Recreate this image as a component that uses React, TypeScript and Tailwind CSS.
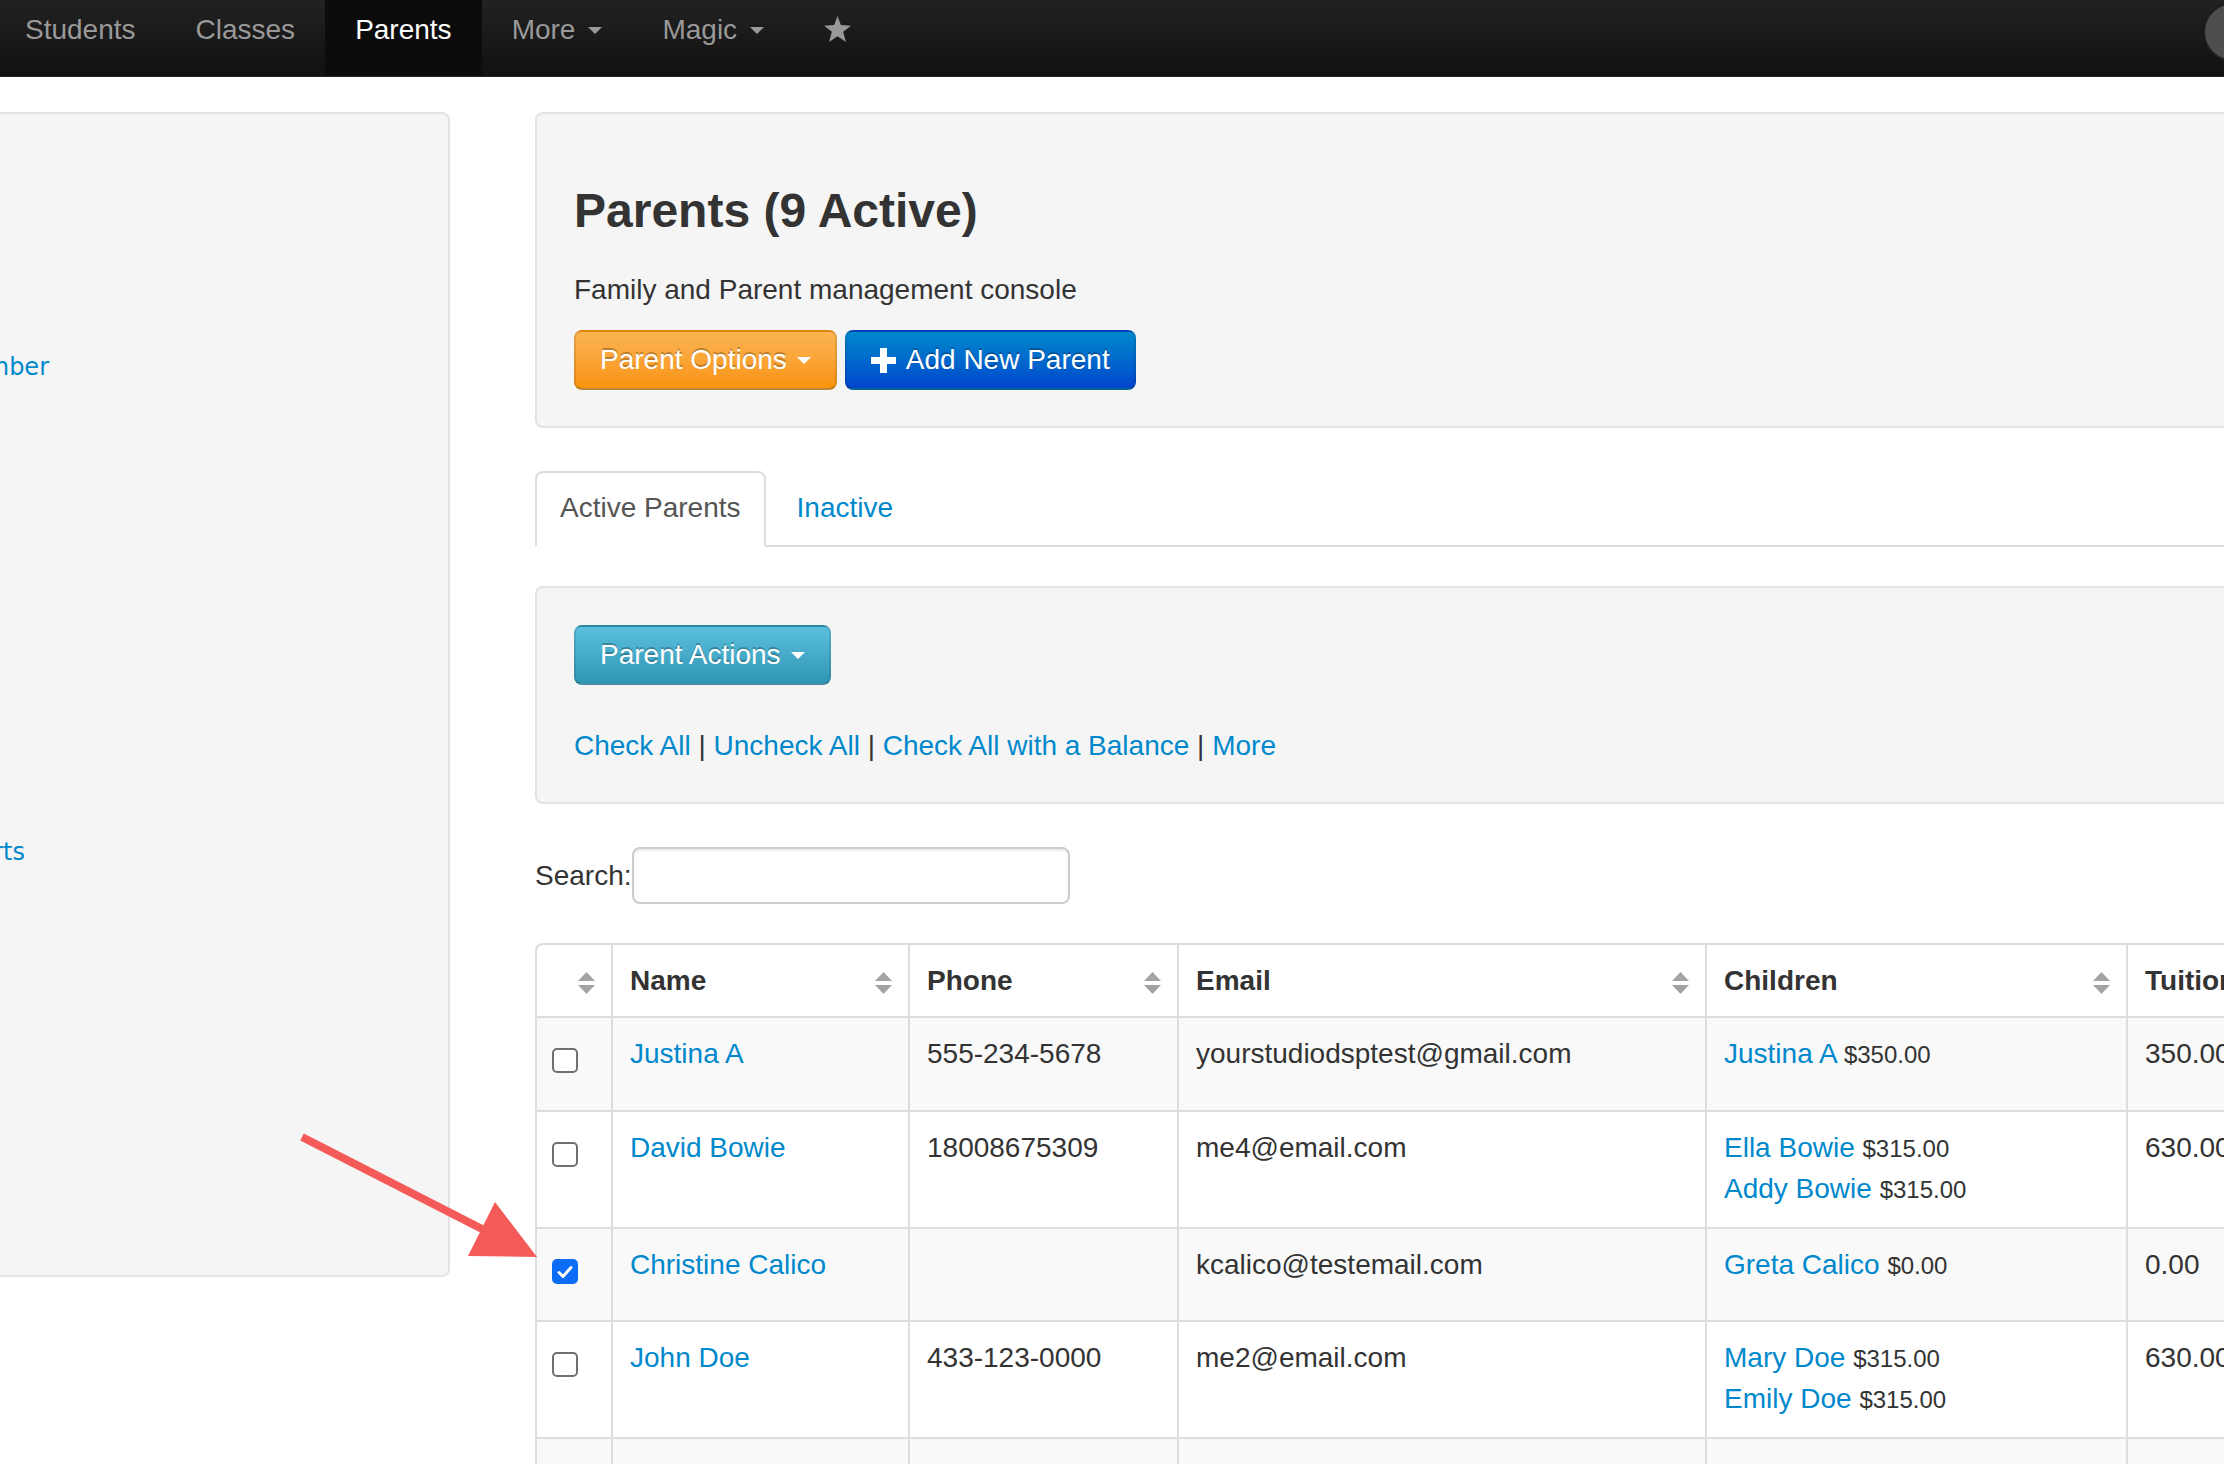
import React from 'react';

type Child = [string, string];

interface ParentRow {
  name: string;
  phone: string;
  email: string;
  children: Child[];
  tuition: string;
  checked?: boolean;
  rowClass: string;
}

const rows: ParentRow[] = [
  { name: 'Justina A', phone: '555-234-5678', email: 'yourstudiodsptest@gmail.com', children: [['Justina A', '$350.00']], tuition: '350.00', rowClass: 'h-[94px] bg-[#f9f9f9]' },
  { name: 'David Bowie', phone: '18008675309', email: 'me4@email.com', children: [['Ella Bowie', '$315.00'], ['Addy Bowie', '$315.00']], tuition: '630.00', rowClass: 'h-[117px] bg-white' },
  { name: 'Christine Calico', phone: '', email: 'kcalico@testemail.com', children: [['Greta Calico', '$0.00']], tuition: '0.00', checked: true, rowClass: 'h-[93px] bg-[#f9f9f9]' },
  { name: 'John Doe', phone: '433-123-0000', email: 'me2@email.com', children: [['Mary Doe', '$315.00'], ['Emily Doe', '$315.00']], tuition: '630.00', rowClass: 'h-[117px] bg-white' },
  { name: 'M Smith', phone: '555-555-0100', email: 'family@email.com', children: [['Rosie Smith', '$315.00']], tuition: '315.00', rowClass: 'h-[100px] bg-[#f9f9f9]' },
];

const Caret = ({ color = 'border-t-white' }: { color?: string }) => (
  <span className={`inline-block ml-[10px] w-0 h-0 border-l-[7px] border-r-[7px] border-t-[7px] border-l-transparent border-r-transparent align-middle ${color}`} />
);

const SortIcon = () => (
  <svg className="absolute right-[16px] top-[27px]" width="17" height="22" viewBox="0 0 17 22">
    <polygon points="8.5,0 17,9 0,9" fill="#a3a3a3" />
    <polygon points="0,13 17,13 8.5,22" fill="#a3a3a3" />
  </svg>
);

const CheckBox = ({ checked }: { checked?: boolean }) =>
  checked ? (
    <span className="mt-[14px] flex w-[26px] h-[25px] rounded-[5px] bg-[#0b6cf5] items-center justify-center">
      <svg width="16" height="14" viewBox="0 0 16 14">
        <path d="M2 7.5 L6 11.5 L14 2.5" stroke="white" strokeWidth="3" fill="none" strokeLinecap="round" strokeLinejoin="round" />
      </svg>
    </span>
  ) : (
    <span className="mt-[14px] block w-[26px] h-[25px] rounded-[5px] border-2 border-[#707070] bg-white" />
  );

const btn = 'inline-flex items-center h-[60px] px-[24px] rounded-[8px] border-2 border-black/10 border-b-black/25 text-white text-[28px] leading-[40px] [text-shadow:0_-2px_0_rgba(0,0,0,0.25)]';

export default function App() {
  const cell = 'border-l-2 border-t-2 border-[#dddddd] align-top pt-[16px] px-[17px] leading-[40px]';

  return (
    <div className="relative w-[2224px] h-[1464px] overflow-hidden bg-white text-[#333] font-['Liberation_Sans',Arial,sans-serif] text-[28px] leading-[40px]">
      {/* Navbar */}
      <div className="relative h-[77px] bg-gradient-to-b from-[#222222] to-[#111111] border-b border-[#252525] flex">
        <ul className="flex -ml-[5px] h-full">
          {['Students', 'Classes'].map(n => (
            <li key={n} className="px-[30px] pt-[10px] text-[#999]">{n}</li>
          ))}
          <li className="px-[30px] pt-[10px] text-white bg-[#0c0c0c]">Parents</li>
          <li className="px-[30px] pt-[10px] text-[#999] flex items-start">
            <span>More</span>
            <span className="h-[40px] flex items-center ml-[3px]"><Caret color="border-t-[#999]" /></span>
          </li>
          <li className="px-[30px] pt-[10px] text-[#999] flex items-start">
            <span>Magic</span>
            <span className="h-[40px] flex items-center ml-[3px]"><Caret color="border-t-[#999]" /></span>
          </li>
          <li className="px-[30px] pt-[16px]">
            <svg width="27" height="26" viewBox="0 0 24 23">
              <polygon points="12,0 15,8 24,8.5 17,14 19.5,23 12,18 4.5,23 7,14 0,8.5 9,8" fill="#999" />
            </svg>
          </li>
        </ul>
        <div className="absolute left-[2203px] top-[2px] w-[60px] h-[60px] rounded-full bg-[#4e4e4e] border-2 border-[#1e1e1e]" />
      </div>

      {/* Body */}
      <div className="flex pt-[35px]">
        {/* Sidebar */}
        <div className="shrink-0 w-[500px] -ml-[50px] h-[1165px] bg-[#f5f5f5] border-2 border-[#e3e3e3] rounded-[8px] font-['DejaVu_Sans',sans-serif] text-[24px] text-[#0088cc]">
          <div className="w-[200px] -ml-[103px] text-right leading-[40px] mt-[233px]">Member</div>
          <div className="w-[200px] -ml-[127px] text-right leading-[40px] mt-[445px]">Reports</div>
        </div>

        {/* Main */}
        <div className="shrink-0 w-[1800px] ml-[85px]">
          {/* Hero */}
          <div className="h-[316px] bg-[#f5f5f5] border-2 border-r-0 border-[#e3e3e3] rounded-l-[8px] pl-[37px] pt-[69px]">
            <h1 className="text-[48px] leading-[56px] font-bold">Parents (9 Active)</h1>
            <p className="mt-[31px]">Family and Parent management console</p>
            <div className="mt-[20px] flex gap-[8px]">
              <button className={`${btn} bg-gradient-to-b from-[#fbb450] to-[#f89406]`}>
                Parent Options <Caret />
              </button>
              <button className={`${btn} bg-gradient-to-b from-[#0088cc] to-[#0044cc]`}>
                <svg className="mr-[10px]" width="25" height="25" viewBox="0 0 25 25">
                  <rect x="9" y="0" width="7" height="25" fill="white" />
                  <rect x="0" y="9" width="25" height="7" fill="white" />
                </svg>
                Add New Parent
              </button>
            </div>
          </div>

          {/* Tabs */}
          <div className="mt-[43px] flex border-b-2 border-[#dddddd]">
            <div className="-mb-[2px] border-2 border-[#dddddd] border-b-transparent bg-white rounded-t-[8px] px-[23px] pt-[15px] pb-[15px] text-[#555]">
              Active Parents
            </div>
            <div className="ml-[4px] border-2 border-transparent px-[25px] pt-[15px] pb-[15px] text-[#0088cc]">Inactive</div>
          </div>

          {/* Actions well */}
          <div className="mt-[39px] h-[218px] bg-[#f5f5f5] border-2 border-r-0 border-[#e3e3e3] rounded-l-[8px] pl-[37px] pt-[37px]">
            <button className={`${btn} bg-gradient-to-b from-[#5bc0de] to-[#2f96b4]`}>
              Parent Actions <Caret />
            </button>
            <div className="mt-[41px]">
              <a className="text-[#0088cc]">Check All</a> | <a className="text-[#0088cc]">Uncheck All</a> |{' '}
              <a className="text-[#0088cc]">Check All with a Balance</a> | <a className="text-[#0088cc]">More</a>
            </div>
          </div>

          {/* Search */}
          <div className="mt-[43px] flex items-center">
            <label>Search:</label>
            <input className="w-[438px] h-[57px] border-2 border-[#cccccc] rounded-[8px] bg-white shadow-[inset_0_2px_2px_rgba(0,0,0,0.075)] outline-none px-[12px]" />
          </div>

          {/* Table */}
          <table className="mt-[39px] table-fixed border-separate border-spacing-0 w-[1891px]">
            <colgroup>
              <col className="w-[76px]" />
              <col className="w-[297px]" />
              <col className="w-[269px]" />
              <col className="w-[528px]" />
              <col className="w-[421px]" />
              <col className="w-[300px]" />
            </colgroup>
            <thead>
              <tr className="h-[73px]">
                <th className={`${cell} relative rounded-tl-[8px]`}><SortIcon /></th>
                {['Name', 'Phone', 'Email', 'Children'].map(h => (
                  <th key={h} className={`${cell} relative text-left font-bold`}>
                    {h}
                    <SortIcon />
                  </th>
                ))}
                <th className={`${cell} text-left font-bold`}>Tuition</th>
              </tr>
            </thead>
            <tbody>
              {rows.map(r => (
                <tr key={r.name} className={r.rowClass}>
                  <td className="border-l-2 border-t-2 border-[#dddddd] align-top pt-[16px] pl-[15px]">
                    <CheckBox checked={r.checked} />
                  </td>
                  <td className={cell}><a className="text-[#0088cc]">{r.name}</a></td>
                  <td className={cell}>{r.phone}</td>
                  <td className={cell}>{r.email}</td>
                  <td className={cell}>
                    {r.children.map(([c, amt]) => (
                      <div key={c}>
                        <a className="text-[#0088cc]">{c}</a> <small className="text-[24px]">{amt}</small>
                      </div>
                    ))}
                  </td>
                  <td className={cell}>{r.tuition}</td>
                </tr>
              ))}
            </tbody>
          </table>
        </div>
      </div>

      {/* Annotation arrow */}
      <svg className="absolute inset-0 pointer-events-none" width="2224" height="1464">
        <line x1="302" y1="1137" x2="486" y2="1231" stroke="#f45b58" strokeWidth="8" />
        <polygon points="537,1257 468,1256 495,1202" fill="#f45b58" />
      </svg>
    </div>
  );
}
